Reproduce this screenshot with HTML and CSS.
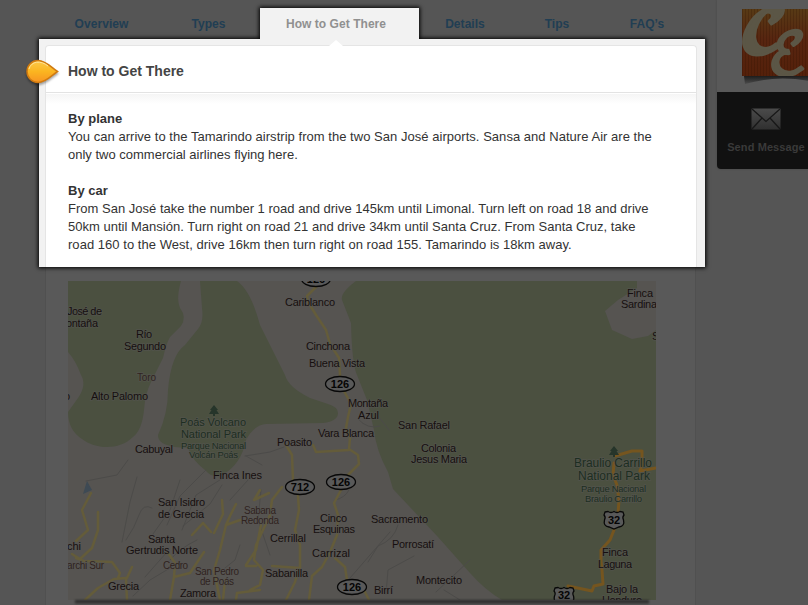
FILE: index.html
```html
<!DOCTYPE html>
<html lang="en">
<head>
<meta charset="utf-8">
<title>Tamarindo</title>
<link rel="stylesheet" href="styles.css">
</head>
<body>
<div class="page">
  <main class="main">
    <nav class="tabs">
      <a class="tab">Overview</a>
      <a class="tab">Types</a>
      <a class="tab active">How to Get There</a>
      <a class="tab">Details</a>
      <a class="tab">Tips</a>
      <a class="tab">FAQ’s</a>
    </nav>
    <section class="spotlight">
      <svg class="marker" width="40" height="34" viewBox="0 0 40 34">
        <defs><linearGradient id="amber" x2="0" y2="1"><stop offset="0" stop-color="#fcca4b"/><stop offset=".5" stop-color="#fbb520"/><stop offset="1" stop-color="#f79422"/></linearGradient></defs>
        <path d="M35.500 15.500C30 12 24 4.500 16 4.500a11 11 0 0 0 0 22C24 26.500 30 19 35.500 15.500Z" fill="url(#amber)" stroke="#d07a10" stroke-width="1.500"/>
        <path d="M7 13C9 5 19 4 26 10" fill="none" stroke="#ffe39a" stroke-width="1"/>
      </svg>
      <div class="card">
        <svg class="notch" width="16" height="8" viewBox="0 0 16 8"><path d="M1 7L8 1l7 6v1H1Z" fill="#fff"/></svg>
        <h2>How to Get There</h2>
        <div class="copy">
          <h3>By plane</h3>
          <p><span class="wide">You can arrive to the Tamarindo airstrip from the two San José airports. Sansa and Nature Air are the</span><br>only two commercial airlines flying here.</p>
          <h3>By car</h3>
          <p><span class="snug">From San José take the number 1 road and drive 145km until Limonal. Turn left on road 18 and drive</span><br><span class="snug">50km until Mansión. Turn right on road 21 and drive 34km until Santa Cruz. From Santa Cruz, take</span><br><span class="wide">road 160 to the West, drive 16km then turn right on road 155. Tamarindo is 18km away.</span></p>
        </div>
      </div>
    </section>
    <section class="dimmed">
      <svg class="map" width="588" height="319" viewBox="68 281 588 319">
        <rect x="68" y="281" width="588" height="319" fill="#565451"/>
        <g fill="#4b5040">
          <path d="M68 281H181C178 292 177 300 180 308Q187 317 181 326L170 337Q166 344 163 358L151 382Q145 394 144 410Q142 430 133 437C120 450 96 450 82 439Q68 430 68 412L78 398Q87 385 81 375Q76 361 68 352Z"/>
          <path d="M200 281H237Q251 291 260 325L285 375Q288 387 310 398L328 404Q338 407 338 413Q338 421 323 423L266 424Q254 425 246 440Q241 465 222 475Q213 479 205 470Q192 460 188 448Q157 447 158 435Q168 414 168 390Q171 355 185 345L198 329Q204 322 202 308Z"/>
          <path d="M356 281H637V288L618 300L605 311L612 330L632 339L648 336L656 330V600H502Q485 590 470 573L438 537L393 489L388 472Q376 450 374 430L367 400L357 375Q352 364 351 323L342 300Q340 293 356 281Z"/>
        </g>
        <g class="lanes">
          <path d="M128 460L117 475L86 481M137 477L130 502L122 542M152 508Q143 503 139 515T126 540M180 480L170 510L153 534M206 470L180 496L167 525M223 478L196 495L182 530M222 485L210 504L183 526M180 562L150 580L133 596M197 540Q180 548 170 560M167 552L145 577M240 545L235 560L225 568M245 456L270 452L284 447M248 480L230 500M261 490L258 520L270 555M262 465L246 456M358 419Q368 430 380 426M372 408L389 430M349 490Q345 498 335 500M398 525Q394 540 378 546L368 562M414 556L388 570L386 594M436 592L470 560M390 532L350 578L340 592M444 590L460 600"/>
        </g>
        <g class="roads">
          <path d="M91 493L82 510L88 530L76 541M98 512L98 530L92 548L80 559L72 554M76 558L84 561L112 562L120 573L118 578M85 600L98 588L114 579L126 578L127 600M127 578L132 567M168 553L175 563L174 577L170 600M174 577L190 573L204 552M192 535L203 523L211 532M222 500L223 514L214 533M236 504L230 516L226 525L220 550L214 570L220 600M236 600L237 593L260 590M226 525L240 520M260 490L254 500L269 493M261 525L256 550L246 565M316 287L307 296L308 302L316 315L326 330L330 344L339 358L340 375M344 391L351 404L348 417L346 428L350 438L349 449L358 455L359 464L346 477M313 445L316 452L349 450M286 445L292 455L293 480M298 496L299 510L295 530L300 545L300 568L272 566M299 568L295 582L286 600M341 490L334 503L338 515L337 535L330 552L322 567L312 576L309 600M335 558L345 567L347 580M365 592L369 600M282 487L272 500L270 515L256 545L254 560L263 570L260 585L250 590M225 580L223 600M246 566L256 566"/>
        </g>
        <g class="trunk">
          <path d="M615 456L632 451H642V465L640 471L656 468M614 463L613 475L617 485L619 500L618 514M614 530L610 540L601 550V562L602 570L603 584L594 586L592 591L568 586"/>
        </g>
        <path d="M87 481L92 490L83 494Z" fill="#3e4a54"/>
        <g fill="#26352a"><path d="M214 405L218 410H216.500L219 414H215V416H213V414H209L211.500 410H210Z"/><path d="M614 446L618 451H616.500L619 455H615V457H613V455H609L611.500 451H610Z"/></g>
        <g class="towns">
          <text x="67" y="315" textLength="35">José de</text><text x="66" y="327" textLength="32">ontaña</text>
          <text x="136" y="338" textLength="16">Río</text><text x="124" y="350" textLength="42">Segundo</text>
          <text x="91" y="400" textLength="57">Alto Palomo</text><text x="64" y="400">o</text>
          <text x="135" y="453" textLength="38">Cabuyal</text><text x="213" y="479" textLength="49">Finca Ines</text>
          <text x="158" y="506" textLength="47">San Isidro</text><text x="158" y="518" textLength="46">de Grecia</text>
          <text x="148" y="543" textLength="27">Santa</text><text x="126" y="554" textLength="72">Gertrudis Norte</text>
          <text x="67" y="550">chi</text><text x="108" y="590" textLength="31">Grecia</text><text x="180" y="597" textLength="36">Zamora</text>
          <text x="285" y="306" textLength="50">Cariblanco</text><text x="306" y="350" textLength="44">Cinchona</text>
          <text x="309" y="367" textLength="56">Buena Vista</text><text x="348" y="407" textLength="40">Montaña</text><text x="358" y="419" textLength="21">Azul</text>
          <text x="398" y="429" textLength="52">San Rafael</text><text x="318" y="437" textLength="56">Vara Blanca</text><text x="277" y="446" textLength="35">Poasito</text>
          <text x="421" y="452" textLength="35">Colonia</text><text x="411" y="463" textLength="56">Jesus Maria</text>
          <text x="320" y="522" textLength="27">Cinco</text><text x="313" y="533" textLength="42">Esquinas</text>
          <text x="371" y="523" textLength="57">Sacramento</text><text x="270" y="542" textLength="36">Cerrillal</text>
          <text x="392" y="548" textLength="42">Porrosatí</text><text x="312" y="557" textLength="38">Carrizal</text>
          <text x="265" y="577" textLength="43">Sabanilla</text><text x="416" y="584" textLength="46">Montecito</text><text x="374" y="594" textLength="19">Birrí</text>
          <text x="627" y="297" textLength="26">Finca</text><text x="621" y="308" textLength="36">Sardina</text><text x="652" y="340">S</text>
          <text x="602" y="556" textLength="26">Finca</text><text x="598" y="568" textLength="34">Laguna</text>
          <text x="606" y="593" textLength="32">Bajo la</text><text x="602" y="604" textLength="40">Honduro</text>
        </g>
        <g class="hamlets">
          <text x="137" y="381" textLength="19">Toro</text><text x="67" y="569" textLength="37">archi Sur</text><text x="163" y="569" textLength="25">Cedro</text>
          <text x="195" y="575" textLength="44">San Pedro</text><text x="200" y="585" textLength="34">de Poás</text>
          <text x="244" y="514" textLength="32">Sabana</text><text x="241" y="524" textLength="38">Redonda</text>
        </g>
        <g class="parks">
          <text x="180" y="426" textLength="66">Poás Volcano</text><text x="181" y="438" textLength="65">National Park</text>
          <text class="large" x="574" y="467" textLength="78">Braulio Carrillo</text><text class="large" x="578" y="480" textLength="72">National Park</text>
          <text class="small" x="181" y="448.500" textLength="65">Parque Nacional</text><text class="small" x="189" y="458" textLength="49">Volcán Poás</text>
          <text class="small" x="581" y="492" textLength="65">Parque Nacional</text><text class="small" x="585" y="501.500" textLength="57">Braulio Carrillo</text>
        </g>
        <g class="shields">
          <ellipse cx="316" cy="279" rx="14.500" ry="7.500"/><ellipse cx="340" cy="384" rx="14.500" ry="7.500"/><ellipse cx="341" cy="482" rx="14.500" ry="7.500"/><ellipse cx="352" cy="587" rx="14.500" ry="7.500"/><ellipse cx="300" cy="487" rx="14.500" ry="7.500"/>
          <path d="M605 512L608 511.500Q611 513.500 614 511.500Q617 513.500 620 511.500L623 512L624 515Q622 517 623.500 520Q625 526 619 527L614 529L609 527Q603 526 604.500 520Q606 517 604 515Z"/>
          <path d="M555 588L558 587.500Q561 589.500 564 587.500Q567 589.500 570 587.500L573 588L574 591Q572 593 573.500 596Q575 602 569 603L564 605L559 603Q553 602 554.500 596Q556 593 554 591Z"/>
          <text x="316" y="283">126</text><text x="340" y="388">126</text><text x="341" y="486">126</text><text x="352" y="591">126</text><text x="300" y="491">712</text><text x="614" y="524">32</text><text x="564" y="599">32</text>
        </g>
      </svg>
      <div class="mapshadow"></div>
    </section>
  </main>
  <aside class="side">
    <div class="brand">
      <svg width="67" height="76" viewBox="0 0 67 76">
        <defs>
          <linearGradient id="rust" x2="0" y2="1"><stop offset="0" stop-color="#573a15"/><stop offset=".45" stop-color="#572510"/><stop offset="1" stop-color="#54200a"/></linearGradient>
          <linearGradient id="under" x2="0" y2="1"><stop offset="0" stop-color="#1d1d1d"/><stop offset="1" stop-color="#4c4c4c"/></linearGradient>
          <pattern id="pin" width="3" height="67" patternUnits="userSpaceOnUse"><rect width="1" height="67" fill="#2a0d00" opacity=".22"/></pattern>
          <clipPath id="tile"><rect width="67" height="67"/></clipPath>
        </defs>
        <path d="M2 67H67V72Q34 66 3 75Z" fill="url(#under)"/>
        <rect width="67" height="67" fill="url(#rust)"/><rect width="67" height="67" fill="url(#pin)"/>
        <g clip-path="url(#tile)"><g class="monogram"><text x="-3" y="43" font-size="57">𝓒</text><text x="26" y="65" font-size="57">ℰ</text></g></g>
      </svg>
    </div>
    <a class="message">
      <svg width="30" height="22" viewBox="0 0 30 22">
        <defs><linearGradient id="paper" x2="0" y2="1"><stop offset="0" stop-color="#4b4b4b"/><stop offset="1" stop-color="#303030"/></linearGradient></defs>
        <rect x=".5" y=".5" width="29" height="21" rx="1" fill="url(#paper)"/>
        <path d="M1 1L15 13.500L29 1M1 21L11 10M29 21L19 10" fill="none" stroke="#181818" stroke-width="1.300"/>
      </svg>
      <span>Send Message</span>
    </a>
  </aside>
</div>
</body>
</html>
```
FILE: styles.css
```css
* { box-sizing: border-box; }
body { margin: 0; overflow: hidden; background: #555; font-family: "Liberation Sans", Arial, sans-serif; }
.page { display: flex; gap: 12px; width: 808px; height: 605px; padding-left: 39px; overflow: hidden; }
.main { flex: none; width: 666px; }
.tabs { display: grid; grid-template-columns: 111px 103px 159px 92px 92px 88px; height: 39px; padding: 8px 0 0 7px; }
.tab { height: 31px; text-align: center; line-height: 32px; font-size: 12px; font-weight: bold; letter-spacing: .05px; color: #213e53; }
.tab.active { position: relative; z-index: 2; padding-right: 7px; background: #f2f2f2; color: #909090; box-shadow: 0 0 4px 1px #000; clip-path: inset(-7px -7px 0 -7px); }
.spotlight { position: relative; z-index: 1; height: 228px; padding: 6px 8px 0 6px; background: #f2f2f2; box-shadow: 0 0 4px 1px #000; }
.marker { position: absolute; z-index: 1; left: -17px; top: 17px; filter: drop-shadow(0 2px 1px rgba(0,0,0,.35)); }
.card { position: relative; height: 222px; border: 1px solid #e5e5e5; border-bottom: 0; border-radius: 4px 4px 0 0; background: #fff; }
.notch { position: absolute; left: 282px; top: -7px; }
h2 { margin: 0; height: 47px; padding-left: 22px; border-bottom: 1px solid #e3e3e3; line-height: 50px; font-size: 14px; color: #444; }
.copy { height: 173px; margin-top: 1px; padding: 16px 0 0 22px; background: linear-gradient(#f5f5f5, #fff 10px); font-size: 13px; line-height: 18px; color: #333; white-space: nowrap; }
.copy h3 { margin: 0; font-size: 13px; line-height: 18px; }
.copy p { margin: 0 0 18px; }
.wide { letter-spacing: .035px; }
.snug { letter-spacing: .01px; }
.dimmed { width: 651px; height: 338px; margin-left: 6px; padding: 14px 0 0 22px; border: solid #505050; border-width: 0 1px; background: #595959; }
.map { display: block; }
.mapshadow { width: 574px; height: 4px; margin-left: 7px; background: linear-gradient(#242424, #444); filter: blur(1px); }
.lanes path, .roads path, .trunk path { fill: none; stroke-linejoin: round; stroke-linecap: round; }
.lanes path { stroke: #4c4b49; stroke-width: 1; }
.roads path { stroke: #645c3a; stroke-width: 2.5; }
.trunk path { stroke: #75551f; stroke-width: 3; }
.map text { font-family: "Liberation Sans", Arial, sans-serif; stroke: #565654; stroke-opacity: .6; stroke-width: 1.5px; paint-order: stroke; }
.towns text { font-size: 11px; fill: #160f0f; }
.hamlets text { font-size: 10px; fill: #302320; }
.parks text { font-size: 11px; fill: #1d2e21; }
.parks .large { font-size: 12px; }
.parks .small { font-size: 9.5px; }
.shields ellipse, .shields path { fill: #595959; stroke: #080808; stroke-width: 1.3; }
.map .shields text { font-size: 11px; font-weight: bold; text-anchor: middle; fill: #050505; stroke: none; }
.side { flex: none; width: 98px; height: 169px; border-radius: 0 0 4px 4px; overflow: hidden; box-shadow: 0 0 2px #444; }
.brand { height: 92px; padding: 9px 0 0 25px; background: #595959; }
.brand svg { display: block; }
.monogram { font-family: "DejaVu Math TeX Gyre", "DejaVu Serif", serif; fill: #5b5646; stroke: #5b5646; stroke-width: 3; stroke-linejoin: round; }
.message { display: flex; flex-direction: column; align-items: center; gap: 10px; height: 77px; padding-top: 16px; background: #111; font-size: 11px; line-height: 14px; font-weight: bold; letter-spacing: .1px; color: #3a3a3a; }
```
